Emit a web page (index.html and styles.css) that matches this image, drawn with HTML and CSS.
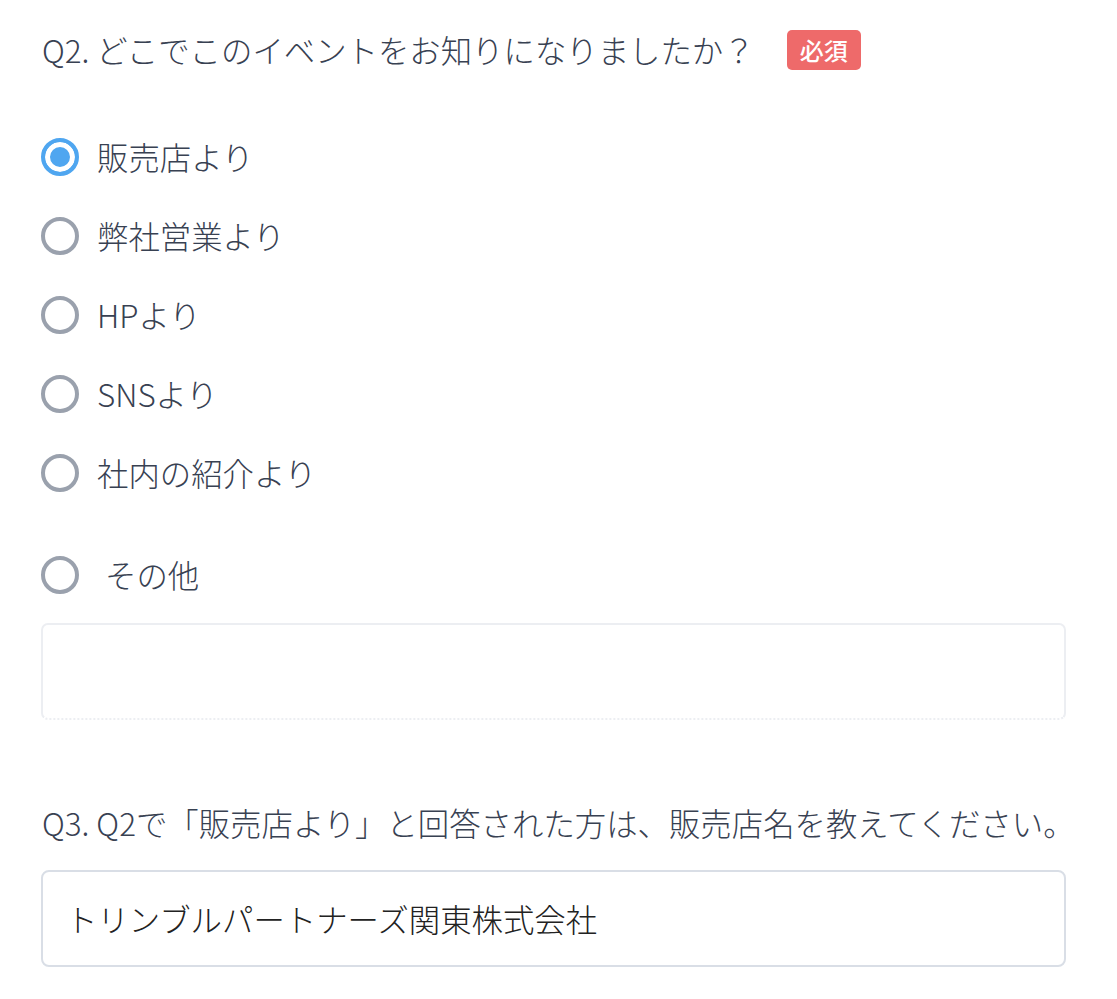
FILE: index.html
```html
<!DOCTYPE html>
<html lang="ja">
<head>
<meta charset="utf-8">
<link rel="stylesheet" href="styles.css">
</head>
<body>
<div class="page">
  <div class="q-title">
    <span class="q-text">Q2. どこでこのイベントをお知りになりましたか？</span>
    <span class="badge">必須</span>
  </div>
  <div class="options">
    <div class="opt"><span class="radio checked"></span><span class="opt-label">販売店より</span></div>
    <div class="opt"><span class="radio"></span><span class="opt-label">弊社営業より</span></div>
    <div class="opt"><span class="radio"></span><span class="opt-label">HPより</span></div>
    <div class="opt"><span class="radio"></span><span class="opt-label">SNSより</span></div>
    <div class="opt"><span class="radio"></span><span class="opt-label">社内の紹介より</span></div>
    <div class="opt opt-other"><span class="radio"></span><span class="opt-label other-label">その他</span></div>
  </div>
  <div class="other-box"></div>
  <div class="q-title q3">
    <span class="q-text">Q3. Q2で「販売店より」と回答された方は、販売店名を教えてください。</span>
  </div>
  <div class="text-input">トリンブルパートナーズ関東株式会社</div>
</div>
</body>
</html>
```

FILE: styles.css
```css
html, body {
  margin: 0;
  padding: 0;
  background: #ffffff;
}
body {
  font-family: "Noto Sans CJK JP", "Noto Sans", sans-serif;
  font-weight: 300;
  color: #384152;
}
.page {
  padding: 27px 51px 0 41px;
}
.q-title {
  display: flex;
  align-items: center;
  font-size: 31.4px;
  line-height: 46px;
  padding-left: 1px;
  white-space: nowrap;
}
.badge {
  margin-left: 32px;
  background: #ee6a6a;
  color: #ffffff;
  font-size: 24px;
  font-weight: 500;
  line-height: 40px;
  height: 40px;
  padding: 0 13px;
  border-radius: 5px;
}
.options {
  margin-top: 65px;
  display: flex;
  flex-direction: column;
  gap: 41px;
}
.opt {
  display: flex;
  align-items: center;
  height: 38px;
}
.opt-other {
  margin-top: 23px;
}
.radio {
  width: 38px;
  height: 38px;
  box-sizing: border-box;
  border: 4px solid #9aa1ad;
  border-radius: 50%;
  flex: none;
}
.radio.checked {
  border-color: #4fa6f0;
  background: #4fa6f0;
  box-shadow: inset 0 0 0 5px #ffffff;
}
.opt-label {
  margin-left: 18px;
  font-size: 31.4px;
  line-height: 38px;
}
.other-label {
  margin-left: 26px;
}
.other-box {
  margin-top: 29px;
  height: 97px;
  box-sizing: border-box;
  border: 2px solid #eceef2;
  border-bottom-style: dotted;
  border-radius: 7px;
}
.q3 {
  margin-top: 80px;
}
.text-input {
  margin-top: 24px;
  height: 97px;
  box-sizing: border-box;
  border: 2px solid #d9dee6;
  border-radius: 8px;
  padding: 0 23px;
  display: flex;
  align-items: center;
  font-size: 31.4px;
  color: #222222;
}
```
